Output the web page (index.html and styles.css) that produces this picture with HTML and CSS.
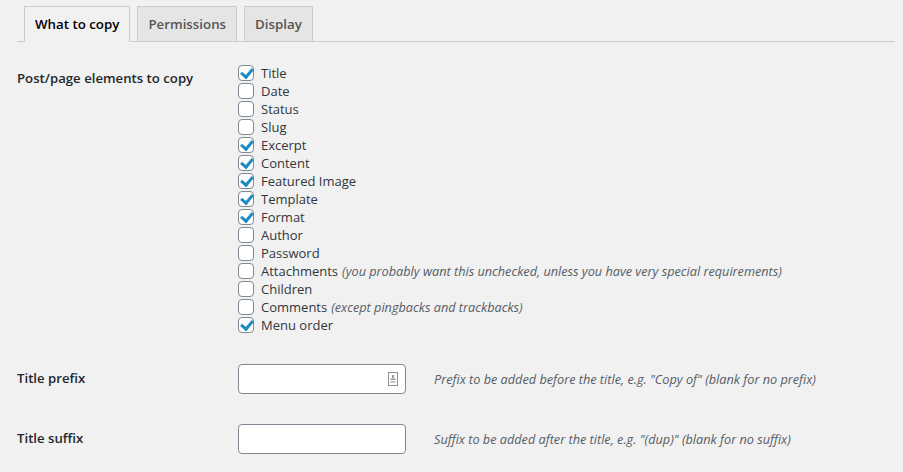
FILE: index.html
```html
<!DOCTYPE html>
<html lang="en">
<head>
    <meta charset="UTF-8">
    <meta name="viewport" content="width=device-width, initial-scale=1.0">
    <title>Duplicate Post Options</title>
    <link rel="stylesheet" href="styles.css">
</head>
<body>

    <div class="wrap">
        <nav class="tabs">
            <a class="tab active" href="#">What to copy</a>
            <a class="tab" href="#">Permissions</a>
            <a class="tab" href="#">Display</a>
        </nav>

        <div class="form">
            <div class="row">
                <div class="th">Post/page elements to copy</div>
                <div class="td">
                    <ul class="checks">
                        <li><label><span class="box on"></span>Title</label></li>
                        <li><label><span class="box"></span>Date</label></li>
                        <li><label><span class="box"></span>Status</label></li>
                        <li><label><span class="box"></span>Slug</label></li>
                        <li><label><span class="box on"></span>Excerpt</label></li>
                        <li><label><span class="box on"></span>Content</label></li>
                        <li><label><span class="box on"></span>Featured Image</label></li>
                        <li><label><span class="box on"></span>Template</label></li>
                        <li><label><span class="box on"></span>Format</label></li>
                        <li><label><span class="box"></span>Author</label></li>
                        <li><label><span class="box"></span>Password</label></li>
                        <li><label><span class="box"></span>Attachments <em class="note">(you probably want this unchecked, unless you have very special requirements)</em></label></li>
                        <li><label><span class="box"></span>Children</label></li>
                        <li><label><span class="box"></span>Comments <em class="note">(except pingbacks and trackbacks)</em></label></li>
                        <li><label><span class="box on"></span>Menu order</label></li>
                    </ul>
                </div>
            </div>

            <div class="row">
                <div class="th">Title prefix</div>
                <div class="td inline">
                    <div class="input">
                        <svg class="key" width="10" height="14" viewBox="0 0 10 14">
                            <rect x="0.5" y="0.5" width="9" height="13" fill="#fff" stroke="#8f8f8f"/>
                            <rect x="4" y="3" width="2" height="3" fill="#9a9a9a"/>
                            <rect x="2.5" y="6.5" width="5" height="1.5" fill="#9a9a9a"/>
                            <rect x="2.5" y="9" width="5" height="2" fill="#c4c4c4"/>
                        </svg>
                    </div>
                    <span class="desc">Prefix to be added before the title, e.g. "Copy of" (blank for no prefix)</span>
                </div>
            </div>

            <div class="row">
                <div class="th">Title suffix</div>
                <div class="td inline">
                    <div class="input"></div>
                    <span class="desc">Suffix to be added after the title, e.g. "(dup)" (blank for no suffix)</span>
                </div>
            </div>
        </div>
    </div>

</body>
</html>
```

FILE: styles.css
```css
body {
    margin: 0;
    background-color: #f1f1f1;
    color: #32373c;
    font-family: "Open Sans", "Noto Sans", sans-serif;
    font-size: 13px;
}
.wrap {
    padding: 6px 8px 0 17px;
}
.tabs {
    display: flex;
    border-bottom: 1px solid #ccc;
}
.tab {
    margin-left: 7px;
    margin-bottom: -1px;
    padding: 5px 10px;
    line-height: 24px;
    font-size: 13.3px;
    font-weight: 600;
    color: #555;
    text-decoration: none;
    background-color: #e5e5e5;
    border: 1px solid #ccc;
}
.tab.active {
    color: #000;
    background-color: #f1f1f1;
    border-bottom-color: #f1f1f1;
}
.form {
    margin-top: 7px;
}
.row {
    display: flex;
}
.th {
    width: 221px;
    flex-shrink: 0;
    padding: 20px 0;
    line-height: 18px;
    font-size: 13.2px;
    font-weight: 600;
    color: #23282d;
}
.td {
    padding: 15px 0;
}
.td.inline {
    display: flex;
    align-items: center;
}
.checks {
    margin: 0;
    padding: 0;
    list-style: none;
}
.checks li {
    height: 18px;
    line-height: 18px;
}
.checks label {
    display: flex;
    align-items: center;
    white-space: nowrap;
}
.box {
    width: 14px;
    height: 14px;
    margin-right: 7px;
    border: 1px solid #7e8993;
    border-radius: 4px;
    background-color: #fff;
    position: relative;
}
.box.on::after {
    content: "";
    position: absolute;
    left: 4px;
    top: 0px;
    width: 5px;
    height: 9px;
    border: solid #1e8cbe;
    border-width: 0 3px 3px 0;
    transform: rotate(40deg);
}
.note {
    margin-left: 4px;
    font-size: 12.7px;
    color: #555d66;
}
.input {
    width: 166px;
    height: 28px;
    border: 1px solid #7e8993;
    border-radius: 4px;
    background-color: #fff;
    display: flex;
    align-items: center;
    justify-content: flex-end;
}
.key {
    margin-right: 7px;
}
.desc {
    margin-left: 28px;
    font-style: italic;
    font-size: 12.7px;
    color: #555d66;
}
```
